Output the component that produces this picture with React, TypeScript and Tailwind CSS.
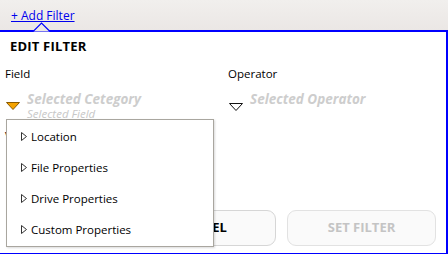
import { useState } from "react"

const font = { fontFamily: '"Open Sans", "Liberation Sans", sans-serif' }

const categories = ["Location", "File Properties", "Drive Properties", "Custom Properties"]

// small outlined caret used in the category list
const RightCaret = () => (
  <svg width="6" height="9" viewBox="0 0 6 9" className="shrink-0">
    <path d="M0.5 0.5 L5.5 4.5 L0.5 8.5 Z" fill="none" stroke="#333" strokeWidth="1" />
  </svg>
)

const DownTriangle = ({ filled }: { filled?: boolean }) => (
  <svg width="14" height="8" viewBox="0 0 14 8" className="shrink-0">
    {filled ? (
      <path d="M0.5 0.5 L13.5 0.5 L7 7.5 Z" fill="#f5a300" stroke="#8a5a00" strokeWidth="1" />
    ) : (
      <path d="M0.5 0.5 L13.5 0.5 L7 7.5 Z" fill="none" stroke="#111" strokeWidth="1" />
    )}
  </svg>
)

export default function App() {
  const [open] = useState(true)

  return (
    <div className="relative w-[448px] h-[254px] overflow-hidden bg-white text-black" style={font}>
      {/* top bar */}
      <div className="h-[30px] bg-gradient-to-b from-[#f1efed] to-[#ebe7e5] pl-[11px] pt-[2px]">
        <a className="text-[12px] leading-[16px] text-[#0000ee] underline">+ Add Filter</a>
      </div>

      {/* edit panel */}
      <div className="relative h-[224px] border-t-2 border-r-2 border-b border-[#0000ff] pt-[6px]">
        <svg width="18" height="10" viewBox="0 0 18 10" className="absolute left-[33px] top-[-10px]">
          <path d="M0 9.5 L8.5 1 L17 9.5" fill="#ece8e6" stroke="#0000ff" strokeWidth="1.2" />
        </svg>

        <div className="pl-[10px] text-[13px] leading-[17px] font-bold tracking-[0.2px]">EDIT FILTER</div>

        <div className="mt-[11px] grid grid-cols-[223px_1fr] pl-[5px]">
          <div>
            <div className="text-[11.5px] leading-[16px]">Field</div>
            <div className="mt-[8px] flex items-start gap-[7px] pl-[1px]">
              <div className="pt-[12px]">
                <DownTriangle filled />
              </div>
              <div className="flex flex-col">
                <span className="text-[13.5px] leading-[18px] font-bold italic text-[#cdcdcd]">Selected Cetegory</span>
                <span className="text-[11.5px] leading-[13px] italic text-[#c8c8c8] -mt-[1px]">Selected Field</span>
              </div>
            </div>
            <div className="mt-[8px] text-[11.5px] leading-[16px]">Value</div>
          </div>
          <div>
            <div className="text-[11.5px] leading-[16px]">Operator</div>
            <div className="mt-[8px] flex items-start gap-[7px] pl-[1px]">
              <div className="pt-[13px]">
                <DownTriangle />
              </div>
              <span className="text-[13.5px] leading-[18px] font-bold italic text-[#cdcdcd]">Selected Operator</span>
            </div>
          </div>
        </div>

        <div className="absolute left-[127px] right-[10px] top-[178px] flex gap-[11px]">
          <button className="w-[149px] h-[36px] rounded-[9px] border border-[#d6d6d6] bg-[#fafafa] text-[13px] font-bold text-black">
            CANCEL
          </button>
          <button className="w-[149px] h-[36px] rounded-[9px] border border-[#e2e2e2] bg-[#fafafa] text-[13px] font-bold text-[#c4c4c4]">
            SET FILTER
          </button>
        </div>
      </div>

      {/* category dropdown */}
      {open && (
        <div className="absolute left-[6px] top-[119px] w-[208px] h-[128px] border border-[#a9a69f] bg-white shadow-[1px_1px_2px_rgba(0,0,0,0.15)] pt-[1px]">
          {categories.map((c) => (
            <div key={c} className="flex items-center gap-[4px] pl-[14px] h-[31px] text-[11.5px]">
              <RightCaret />
              <span>{c}</span>
            </div>
          ))}
        </div>
      )}
    </div>
  )
}
